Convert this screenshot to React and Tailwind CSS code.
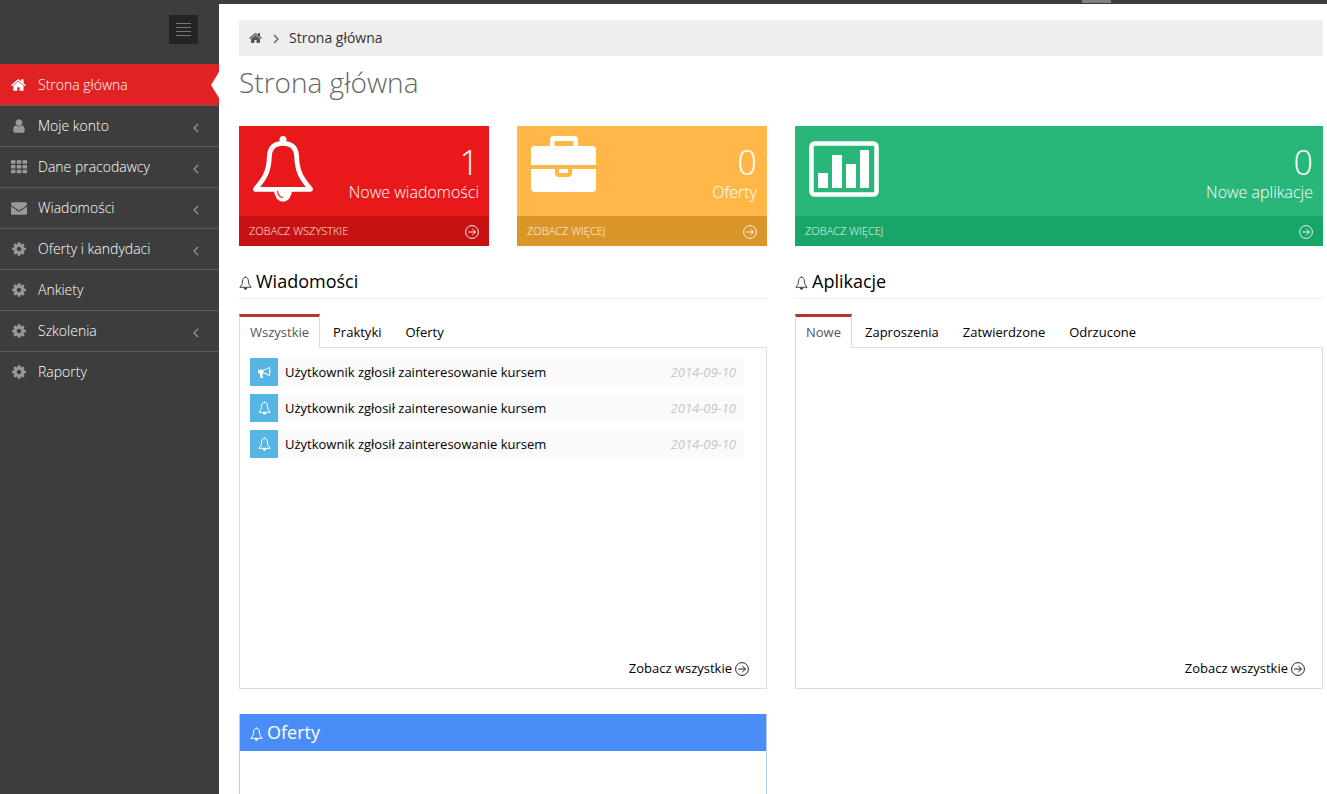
import { useState } from 'react'

const HOME = 'M1408 992v480q0 26-19 45t-45 19h-384v-384h-256v384h-384q-26 0-45-19t-19-45v-480q0-1 .5-3t.5-3l575-474 575 474q1 2 1 6zm223-69l-62 74q-8 9-21 11h-3q-13 0-21-7l-692-577-692 577q-12 8-24 7-13-2-21-11l-62-74q-8-10-7-23.5t11-21.5l719-599q32-26 76-26t76 26l244 204v-195q0-14 9-23t23-9h192q14 0 23 9t9 23v408l219 182q10 8 11 21.5t-7 23.5z'
const USER = 'M1536 1399q0 109-62.5 187t-150.5 78h-854q-88 0-150.5-78t-62.5-187q0-85 8.5-160.5t31.5-152 58.5-131 94-89 134.5-34.5q131 128 313 128t313-128q76 0 134.5 34.5t94 89 58.5 131 31.5 152 8.5 160.5zm-256-887q0 159-112.5 271.5t-271.5 112.5-271.5-112.5-112.5-271.5 112.5-271.5 271.5-112.5 271.5 112.5 112.5 271.5z'
const ENVELOPE = 'M1792 710v794q0 66-47 113t-113 47h-1472q-66 0-113-47t-47-113v-794q44 49 101 87 362 246 497 345 57 42 92.5 65.5t94.5 48 110 24.5h2q51 0 110-24.5t94.5-48 92.5-65.5q170-123 498-345 57-39 100-87zm0-294q0 79-49 151t-122 123q-376 261-468 325-10 7-42.5 31t-54 38.5-52 32.5-57.5 27-50 9h-2q-23 0-50-9t-57.5-27-52-32.5-54-38.5-42.5-31q-91-64-262-182.5t-205-142.5q-62-42-117-115.5t-55-136.5q0-78 41.5-130t118.5-52h1472q65 0 112.5 47t47.5 113z'
const COG = 'M1152 896q0-106-75-181t-181-75-181 75-75 181 75 181 181 75 181-75 75-181zm512-109v222q0 12-8 23t-20 13l-185 28q-19 54-39 91 35 50 107 138 10 12 10 25t-9 23q-27 37-99 108t-94 71q-12 0-26-9l-138-108q-44 23-91 38-16 136-29 186-7 28-36 28h-222q-14 0-24.5-8.5t-11.5-21.5l-28-184q-49-16-90-37l-141 107q-10 9-25 9-14 0-25-11-126-114-165-168-7-10-7-23 0-12 8-23 15-21 51-66.5t54-70.5q-27-50-41-99l-183-27q-13-2-21-12.5t-8-23.5v-222q0-12 8-23t19-13l186-28q14-46 39-92-40-57-107-138-10-12-10-24 0-10 9-23 26-36 98.5-107.5t94.5-71.5q13 0 26 10l138 107q44-23 91-38 16-136 29-186 7-28 36-28h222q14 0 24.5 8.5t11.5 21.5l28 184q49 16 90 37l142-107q9-9 24-9 13 0 25 10 129 119 165 170 7 8 7 22 0 12-8 23-15 21-51 66.5t-54 70.5q26 50 41 98l183 28q13 2 21 12.5t8 23.5z'
const BULLHORN = 'M1664 640q53 0 90.5 37.5t37.5 90.5-37.5 90.5-90.5 37.5v384q0 52-38 90t-90 38q-417-347-812-380-58 19-91 66t-31 100.5 40 92.5q-20 33-23 65.5t6 58 33.5 55 48 50 61.5 50.5q-29 58-111.5 83t-168.5 11.5-132-55.5q-7-23-29.5-87.5t-32-94.5-23-89-15-101 3.5-98.5 22-110.5h-122q-66 0-113-47t-47-113v-192q0-66 47-113t113-47h480q435 0 896-384 52 0 90 38t38 90v384zm-128 604v-954q-394 302-768 343v270q377 42 768 341z'
const GRID = 'M0 130h500v400H0zM646 130h500v400H646zM1292 130h500v400h-500zM0 666h500v400H0zM646 666h500v400H646zM1292 666h500v400h-500zM0 1202h500v400H0zM646 1202h500v400H646zM1292 1202h500v400h-500z'

function Glyph({ d, className }) {
  return (
    <svg viewBox="0 0 1792 1792" fill="currentColor" className={className} aria-hidden="true">
      <path d={d} />
    </svg>
  )
}

function Bell({ className }) {
  return (
    <svg viewBox="0 0 60 66" fill="none" stroke="currentColor" strokeWidth="4.8" strokeLinejoin="round" className={className} aria-hidden="true">
      <path d="M30 7.300C20 7.300 16.500 13 16.300 21 16 38 9 45 2.400 53.300H57.600C51 45 44 38 43.700 21 43.500 13 40 7.300 30 7.300Z" />
      <circle cx="30" cy="3.500" r="3.500" fill="currentColor" stroke="none" />
      <path d="M21 54a9 11.500 0 0 0 18 0z" fill="currentColor" stroke="none" />
      <path d="M24.500 55q.5 6 5.500 6.500" strokeWidth="1.200" className="stroke-[#e9191b]" />
    </svg>
  )
}

// thin bell used in headings and list rows
function SmallBell({ className }) {
  return (
    <svg viewBox="0 0 13 14" fill="none" stroke="currentColor" strokeLinejoin="round" className={className} aria-hidden="true">
      <path d="M6.500 1.500C4.500 1.500 3.700 2.800 3.600 5 3.500 8 2.500 9.500.8 11.300H12.200C10.500 9.500 9.500 8 9.400 5 9.300 2.800 8.500 1.500 6.500 1.500Z" />
      <path d="M6.500 .3v1.200" />
      <path d="M4.700 11.500a1.800 2.200 0 0 0 3.600 0z" fill="currentColor" stroke="none" />
    </svg>
  )
}

function Briefcase() {
  return (
    <svg viewBox="0 0 66 56" fill="currentColor" className="w-[66px] h-14" aria-hidden="true">
      <path fillRule="evenodd" d="M19 10V4q0-4 4-4h20q4 0 4 4v6h14q4 0 4 4v15H0V14q0-4 4-4zM23.500 10h19V5h-19z" />
      <path d="M0 33h24v4q0 4 4 4h9q4 0 4-4v-4h24v19q0 4-4 4H4q-4 0-4-4z" />
      <path d="M28 33h9v4h-9z" />
    </svg>
  )
}

function Chart() {
  return (
    <svg viewBox="0 0 70 56" fill="currentColor" className="w-[70px] h-14" aria-hidden="true">
      <rect x="2.500" y="2.500" width="65" height="51" rx="3" fill="none" stroke="currentColor" strokeWidth="4.500" />
      <path d="M9 32h10v15H9zM23 14h10v33H23zM37 23h10v24H37zM51 9h9v38h-9z" />
    </svg>
  )
}

function Angle({ left, className }) {
  return (
    <svg viewBox="0 0 6 10" fill="none" stroke="currentColor" className={className} aria-hidden="true">
      <path d={left ? 'M5 1L1 5l4 4' : 'M1 1l4 4-4 4'} strokeWidth="1.200" />
    </svg>
  )
}

function ArrowCircle({ className }) {
  return (
    <svg viewBox="0 0 14 14" fill="none" stroke="currentColor" className={className} aria-hidden="true">
      <circle cx="7" cy="7" r="6.400" />
      <path d="M3.200 7h7.300M7.300 4l3.200 3-3.200 3" />
    </svg>
  )
}

const menu = [
  { label: 'Strona główna', icon: HOME, active: true },
  { label: 'Moje konto', icon: USER, sub: true },
  { label: 'Dane pracodawcy', icon: GRID, sub: true },
  { label: 'Wiadomości', icon: ENVELOPE, sub: true },
  { label: 'Oferty i kandydaci', icon: COG, sub: true },
  { label: 'Ankiety', icon: COG },
  { label: 'Szkolenia', icon: COG, sub: true },
  { label: 'Raporty', icon: COG },
]

const messages = [
  { icon: 'bullhorn', text: 'Użytkownik zgłosił zainteresowanie kursem', date: '2014-09-10' },
  { icon: 'bell', text: 'Użytkownik zgłosił zainteresowanie kursem', date: '2014-09-10' },
  { icon: 'bell', text: 'Użytkownik zgłosił zainteresowanie kursem', date: '2014-09-10' },
]

function Sidebar() {
  return (
    <aside className="w-[219px] shrink-0 bg-[#3d3d3d]">
      <div className="flex justify-end h-[60px] pt-[11px] pr-[21px]">
        <button type="button" aria-label="Menu" className="flex items-center justify-center size-[29px] bg-[#242424] text-[#777]">
          <svg viewBox="0 0 15 14" stroke="currentColor" className="w-[15px] h-[14px]" aria-hidden="true">
            <path d="M0 .5h15M0 4.500h15M0 8.500h15M0 12.500h15" />
          </svg>
        </button>
      </div>
      <nav>
        <ul>
          {menu.map((item) => (
            <li key={item.label}>
              <a
                href="#"
                className={
                  item.active
                    ? 'relative flex items-center h-[41px] pl-[11px] pr-5 bg-[#e02222] text-white'
                    : 'relative flex items-center h-[41px] pl-[11px] pr-5 border-t border-[#5c5c5c] text-white'
                }
              >
                <Glyph d={item.icon} className={item.active ? 'size-4' : 'size-4 text-[#999]'} />
                <span className="ml-[11px] text-sm font-light">{item.label}</span>
                {item.sub && <Angle left className="w-[6px] h-[10px] mt-1 ml-auto text-[#999]" />}
                {item.active && (
                  <svg viewBox="0 0 8 26" className="absolute right-0 w-2 h-[26px] fill-white" aria-hidden="true">
                    <path d="M8 0L0 13l8 13z" />
                  </svg>
                )}
              </a>
            </li>
          ))}
        </ul>
      </nav>
    </aside>
  )
}

function StatCard({ className, footClassName, icon, value, label, more }) {
  return (
    <div className={className}>
      <div className="flex justify-between h-[90px] px-[10px] text-white">
        {icon}
        <div className="pt-4 text-right font-light">
          <div className="text-[34px] leading-10">{value}</div>
          <div className="text-base leading-5">{label}</div>
        </div>
      </div>
      <a href="#" className={footClassName}>
        {more}
        <ArrowCircle className="size-[14px] mt-[2px]" />
      </a>
    </div>
  )
}

function TabBox({ title, tabs, children }) {
  const [current, setCurrent] = useState(tabs[0])

  return (
    <section className="col-span-2">
      <h2 className="flex items-center gap-1 h-9 pt-px border-b border-[#eee] text-lg text-black">
        <SmallBell className="w-[13px] h-[14px] mt-1 text-[#444]" />
        {title}
      </h2>
      <div role="tablist" className="relative flex h-[34px] mt-[15px] gap-[2px] -mb-px">
        {tabs.map((tab) => (
          <button
            key={tab}
            type="button"
            role="tab"
            aria-selected={tab === current}
            onClick={() => setCurrent(tab)}
            className={
              tab === current
                ? 'px-[10px] pb-[2px] border-x border-t-3 border-x-[#ddd] border-t-[#b5352b] bg-white text-[#555]'
                : 'px-[11px] pt-px text-black'
            }
          >
            {tab}
          </button>
        ))}
      </div>
      <div className="flex flex-col h-[342px] border border-[#ddd] pt-[10px] pl-[10px] pr-[17px] pb-[10px]">
        {children}
        <a href="#" className="flex items-center self-end gap-[3px] mt-auto text-black">
          Zobacz wszystkie
          <ArrowCircle className="size-[14px] mt-[2px] text-[#222]" />
        </a>
      </div>
    </section>
  )
}

export default function App() {
  return (
    <div className="flex flex-col min-h-screen bg-white font-['Open_Sans',sans-serif] text-[13px] leading-5 text-black">
      <header className="flex justify-end h-1 bg-[#3d3d3d]">
        <div className="w-[29px] h-[3px] mr-[216px] bg-[#808080]"></div>
      </header>
      <div className="flex flex-1">
        <Sidebar />
        <main className="flex flex-col flex-1 pt-4 pl-5 pr-1">
          <div className="flex items-center h-9 px-[10px] bg-[#eee] text-sm text-[#333]">
            <a href="#" aria-label="Start">
              <Glyph d={HOME} className="size-[14px] text-[#555]" />
            </a>
            <Angle className="w-[6px] h-[10px] mt-px mx-[10px] text-[#555]" />
            <a href="#">Strona główna</a>
          </div>
          <h1 className="pt-[6px] pb-6 text-[28px] leading-10 font-light text-[#666]">Strona główna</h1>

          <div className="grid grid-cols-4 gap-x-7">
            <StatCard
              className="bg-[#e9191b]"
              footClassName="flex items-center justify-between h-[30px] px-[10px] bg-[#c81112] text-[11px] font-light uppercase text-white/90"
              icon={<Bell className="w-[60px] h-[66px] mt-[10px] ml-1" />}
              value="1"
              label="Nowe wiadomości"
              more="Zobacz wszystkie"
            />
            <StatCard
              className="bg-[#ffb848]"
              footClassName="flex items-center justify-between h-[30px] px-[10px] bg-[#da9628] text-[11px] font-light uppercase text-white/90"
              icon={<div className="pt-[10px] pl-1"><Briefcase /></div>}
              value="0"
              label="Oferty"
              more="Zobacz więcej"
            />
            <StatCard
              className="col-span-2 bg-[#28b779]"
              footClassName="flex items-center justify-between h-[30px] px-[10px] bg-[#17a668] text-[11px] font-light uppercase text-white/90"
              icon={<div className="pt-[15px] pl-1"><Chart /></div>}
              value="0"
              label="Nowe aplikacje"
              more="Zobacz więcej"
            />
          </div>

          <div className="grid grid-cols-4 gap-x-7 mt-[17px]">
            <TabBox title="Wiadomości" tabs={['Wszystkie', 'Praktyki', 'Oferty']}>
              <ul className="flex flex-col gap-2 pr-[5px]">
                {messages.map((m, i) => (
                  <li key={i} className="flex items-center h-7 bg-[#fafafa]">
                    <span className="flex items-center justify-center size-7 bg-[#57b5e3] text-white">
                      {m.icon === 'bullhorn'
                        ? <Glyph d={BULLHORN} className="size-[13px]" />
                        : <SmallBell className="w-[13px] h-[14px]" />}
                    </span>
                    <span className="ml-[7px]">{m.text}</span>
                    <span className="ml-auto mr-2 italic text-[#c0c9cc]">{m.date}</span>
                  </li>
                ))}
              </ul>
            </TabBox>
            <TabBox title="Aplikacje" tabs={['Nowe', 'Zaproszenia', 'Zatwierdzone', 'Odrzucone']} />
          </div>

          <div className="grid grid-cols-4 flex-1 gap-x-7 mt-[25px]">
            <section className="col-span-2 border-x border-[#b4cef8]">
              <h2 className="flex items-center gap-1 h-[37px] px-[10px] pb-px bg-[#4b8df8] text-lg text-white">
                <SmallBell className="w-[13px] h-[14px] mt-1" />
                Oferty
              </h2>
            </section>
          </div>
        </main>
      </div>
    </div>
  )
}
